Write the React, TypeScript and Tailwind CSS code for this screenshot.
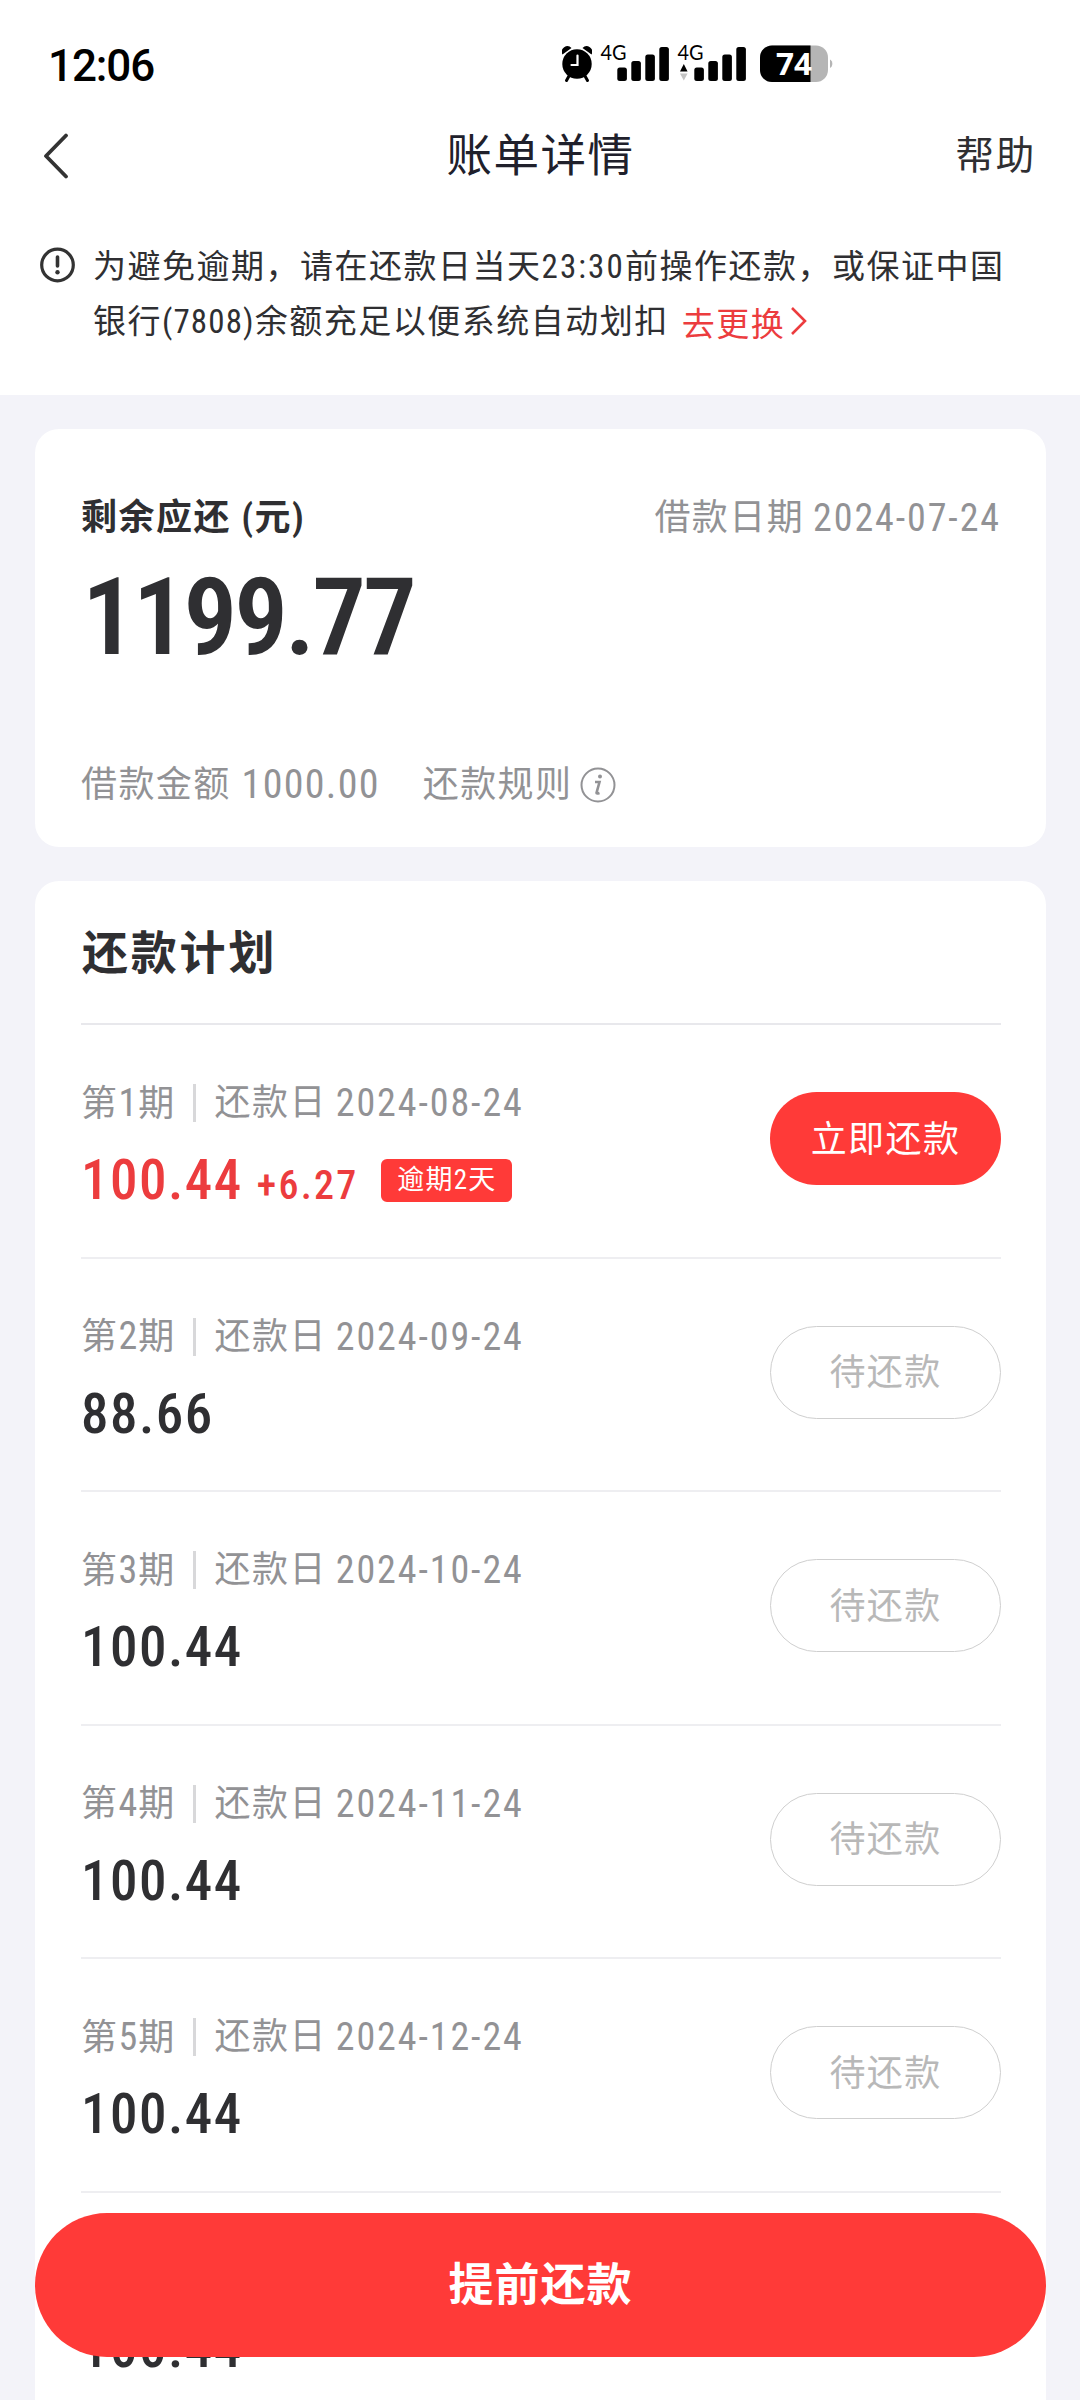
import type { ReactNode } from "react";

type Installment = {
  no: number;
  date: string;
  amount: string;
  penalty?: string;
  overdue?: number;
};

const installments: Installment[] = [
  { no: 1, date: "2024-08-24", amount: "100.44", penalty: "+6.27", overdue: 2 },
  { no: 2, date: "2024-09-24", amount: "88.66" },
  { no: 3, date: "2024-10-24", amount: "100.44" },
  { no: 4, date: "2024-11-24", amount: "100.44" },
  { no: 5, date: "2024-12-24", amount: "100.44" },
  { no: 6, date: "2025-01-24", amount: "100.44" },
];

// Condensed digits used inside Chinese text
function Num({ children, className = "" }: { children: ReactNode; className?: string }) {
  return <span className={`font-['Roboto_Condensed','Roboto',sans-serif] ${className}`}>{children}</span>;
}

function Signal({ arrows = false }: { arrows?: boolean }) {
  return (
    <svg width="68" height="38" viewBox="0 0 68 38" className="overflow-visible">
      <text x="-1.5" y="15" fontFamily="Lato, sans-serif" fontSize="21" textLength="26" lengthAdjust="spacingAndGlyphs">
        4G
      </text>
      {arrows && (
        <>
          <path d="M1 26.5 L4.8 19 L8.6 26.5 Z" />
          <path d="M1 28.5 L4.8 35.5 L8.6 28.5 Z" fill="#c4c4c4" />
        </>
      )}
      <rect x="15.3" y="22.5" width="9.6" height="13.5" rx="2.5" />
      <rect x="29.3" y="16" width="9.6" height="20" rx="2.5" />
      <rect x="43.3" y="9.5" width="9.6" height="26.5" rx="2.5" />
      <rect x="57.3" y="2" width="9.6" height="34" rx="2.5" />
    </svg>
  );
}

function StatusBar() {
  return (
    <div className="flex h-[110px] items-start pl-[48px] pt-[45px]">
      <span className="w-[514px] font-['Roboto',sans-serif] text-[44px] leading-[42px] font-medium tracking-[-1.1px] text-black">
        12:06
      </span>

      {/* Alarm */}
      <svg width="30" height="38" viewBox="0 0 30 38" className="mr-[10px]">
        <path d="M7 31 L4.5 35.5 M23 31 L25.5 35.5" stroke="#000" strokeWidth="3" strokeLinecap="round" />
        <path d="M0.5 9.5 A5.6 5.6 0 0 1 9.5 3 Z M29.5 9.5 A5.6 5.6 0 0 0 20.5 3 Z" />
        <circle cx="15" cy="19" r="14.7" />
        <path d="M15.5 10.5 V20 H9.5" stroke="#fff" strokeWidth="2.2" fill="none" strokeLinecap="round" />
      </svg>
      <Signal />
      <span className="w-[9px]" />
      <Signal arrows />
      <span className="w-[13px]" />

      {/* Battery */}
      <svg width="76" height="38" viewBox="0 0 76 38" className="overflow-visible">
        <defs>
          <clipPath id="battery">
            <rect x="0" y="0.5" width="68" height="36.5" rx="12" />
          </clipPath>
        </defs>
        <g clipPath="url(#battery)">
          <rect width="70" height="38" fill="#b5b5b5" />
          <rect width="50.5" height="38" />
        </g>
        <path d="M70 14.5 A5 5 0 0 1 70 23 Z" fill="#b5b5b5" />
        <text x="16" y="29.5" fontFamily="Open Sans, sans-serif" fontSize="31" fontWeight="700" fill="#fff" textLength="36" lengthAdjust="spacingAndGlyphs">
          74
        </text>
      </svg>
    </div>
  );
}

function PlanRow({ item }: { item: Installment }) {
  const overdue = item.overdue !== undefined;

  return (
    <li className="flex h-[233.5px] justify-between border-b-2 border-[#eeeef1]">
      <div className="pt-[58px]">
        <div className="flex h-[40px] items-center text-[36px] leading-[40px] tracking-[1.4px] text-[#929295]">
          <span>
            第<Num className="text-[38px] tracking-[1px]">{item.no}</Num>期
          </span>
          <span className="mr-[19px] ml-[17px] h-[38px] w-[3px] bg-[#d8d8da]" />
          <span>还款日</span>
          <Num className="ml-[9px] text-[38px] tracking-[1.9px]">{item.date}</Num>
        </div>
        <div className={`mt-[32px] flex h-[50px] items-baseline font-medium ${overdue ? "text-[#ec3c3e]" : "text-[#2f2f32]"}`}>
          <Num className="text-[55px] leading-[50px] tracking-[1.5px]">{item.amount}</Num>
          {overdue && (
            <>
              <Num className="ml-[14px] text-[40px] tracking-[2.2px]">{item.penalty}</Num>
              <span className="ml-[23px] flex h-[43px] w-[131px] items-center justify-center self-center rounded-[6px] bg-[#ff3a38] text-[27px] leading-[30px] font-normal tracking-[1.2px] text-white">
                逾期<Num>{item.overdue}</Num>天
              </span>
            </>
          )}
        </div>
      </div>
      <button
        type="button"
        className={`mt-[67px] h-[93px] w-[231px] rounded-full pt-[2px] text-[36px] leading-none tracking-[1.4px] ${
          overdue ? "bg-[#ff3a38] text-white" : "border border-[#cfcfcf] bg-white text-[#b8b8b8]"
        }`}
      >
        {overdue ? "立即还款" : "待还款"}
      </button>
    </li>
  );
}

export default function App() {
  return (
    <div className="relative h-[2400px] w-[1080px] overflow-hidden bg-[#f3f3f9] font-['Roboto','Noto_Sans_CJK_SC',sans-serif] text-[#2f2f32]">
      <header className="h-[395px] bg-white">
        <StatusBar />

        {/* Title bar */}
        <div className="grid h-[92px] grid-cols-3 items-center pr-[44px] pl-[43px]">
          <svg width="26" height="46" viewBox="0 0 26 46" fill="none" stroke="#333" strokeWidth="3.8" strokeLinecap="round" strokeLinejoin="round">
            <path d="M23 2.5 L3 23 L23 43.5" />
          </svg>
          <h1 className="pt-[1px] pl-[2px] text-center text-[45.5px] leading-[50px] tracking-[1.5px] text-[#20202b]">账单详情</h1>
          <span className="text-right text-[38.5px] leading-[44px] tracking-[1.8px]">帮助</span>
        </div>

        {/* Notice */}
        <div className="flex pt-[37px] pl-[40px]">
          <svg width="36" height="36" viewBox="0 0 36 36" className="mt-[8px] mr-[17px]" fill="none" stroke="#333">
            <circle cx="17.5" cy="18" r="15.8" strokeWidth="3.2" />
            <path d="M17.5 10 V19" strokeWidth="3.6" strokeLinecap="round" />
            <circle cx="17.5" cy="25.2" r="2.2" fill="#333" stroke="none" />
          </svg>
          <div className="text-[33px] leading-[55px] tracking-[1.5px] whitespace-nowrap">
            <p className="h-[55px]">
              为避免逾期，请在还款日当天<Num className="tracking-[2.1px]">23:30</Num>前操作还款，或保证中国
            </p>
            <p className="flex h-[55px]">
              <span>
                银行<Num className="tracking-[1.1px]">(7808)</Num>余额充足以便系统自动划扣
              </span>
              <a className="ml-[13px] flex pt-[3px] text-[#ec3c3e]">
                去更换
                <svg width="18" height="30" viewBox="0 0 18 30" fill="none" stroke="currentColor" strokeWidth="2.6" className="mt-[9px] ml-[5px]">
                  <path d="M2 2 L15 15 L2 28" />
                </svg>
              </a>
            </p>
          </div>
        </div>
      </header>

      {/* Summary */}
      <section className="mr-[34px] ml-[35px] mt-[34px] h-[418px] rounded-[24px] bg-white pt-[66px] pr-[45px] pl-[46px]">
        <div className="flex h-[46px] items-center justify-between">
          <h2 className="text-[36px] leading-[46px] font-bold tracking-[1.5px]">
            剩余应还 <Num>(</Num>元<Num>)</Num>
          </h2>
          <p className="flex text-[36px] leading-[46px] tracking-[1.4px] text-[#929295]">
            借款日期<Num className="ml-[9px] text-[38px] tracking-[1.9px]">2024-07-24</Num>
          </p>
        </div>
        <p className="mt-[22px] h-[110px] pl-[1px] leading-[110px]">
          <Num className="text-[107px] font-semibold tracking-[-3.1px]">1199.77</Num>
        </p>
        <div className="mt-[89px] flex h-[46px] items-center text-[36px] leading-[46px] tracking-[1.4px] text-[#929295]">
          借款金额<Num className="ml-[11px] text-[40px] tracking-[1.3px]">1000.00</Num>
          <span className="ml-[43px]">还款规则</span>
          <svg width="36" height="36" viewBox="0 0 36 36" className="ml-[8px]" fill="none" stroke="#929295">
            <circle cx="18" cy="18" r="16.5" strokeWidth="2" />
            <circle cx="20" cy="9.5" r="2" fill="#929295" stroke="none" />
            <path d="M15 15 H19.5 L16.5 26 Q16.5 27 19.5 26" strokeWidth="2.6" />
          </svg>
        </div>
      </section>

      {/* Repayment plan */}
      <section className="mr-[34px] ml-[35px] mt-[34px] rounded-t-[24px] bg-white pr-[45px] pl-[46px]">
        <h2 className="h-[144px] border-b-2 border-[#e8e8ec] pl-[1px] text-[46px] leading-[144px] font-bold tracking-[2.8px]">还款计划</h2>
        <ul>
          {installments.map((item) => (
            <PlanRow key={item.no} item={item} />
          ))}
        </ul>
      </section>

      <button
        type="button"
        className="absolute bottom-[43px] left-[35px] h-[144px] w-[1011px] rounded-full bg-[#ff3a38] text-[45px] leading-none font-bold tracking-[1px] text-white"
      >
        提前还款
      </button>
    </div>
  );
}
